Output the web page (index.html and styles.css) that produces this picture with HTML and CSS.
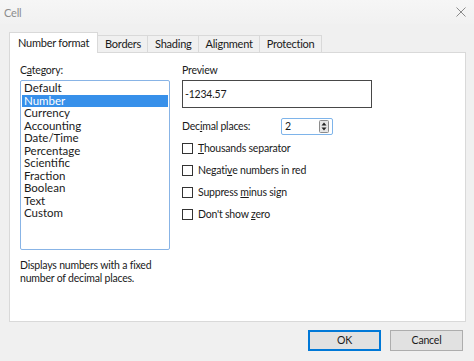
FILE: index.html
```html
<!DOCTYPE html>
<html>
<head>
<meta charset="utf-8">
<link rel="stylesheet" href="styles.css">
</head>
<body>
<div class="window">
  <div class="titlebar">
    <span class="title">Cell</span>
    <svg class="close" width="10" height="10" viewBox="0 0 10 10"><path d="M0.5 0.5 L9.5 9.5 M9.5 0.5 L0.5 9.5" stroke="#8a8a8a" stroke-width="1"/></svg>
  </div>
  <div class="tabs">
    <div class="tab active">Number format</div>
    <div class="tab">Borders</div>
    <div class="tab">Shading</div>
    <div class="tab">Alignment</div>
    <div class="tab">Protection</div>
  </div>
  <div class="panel">
    <div class="col-left">
      <div class="label">C<u>a</u>tegory:</div>
      <div class="listbox">
        <div class="item">Default</div>
        <div class="item selected">Number</div>
        <div class="item">Currency</div>
        <div class="item">Accounting</div>
        <div class="item">Date/Time</div>
        <div class="item">Percentage</div>
        <div class="item">Scientific</div>
        <div class="item">Fraction</div>
        <div class="item">Boolean</div>
        <div class="item">Text</div>
        <div class="item">Custom</div>
      </div>
      <div class="desc">Displays numbers with a fixed<br>number of decimal places.</div>
    </div>
    <div class="col-right">
      <div class="label">Preview</div>
      <div class="preview">-1234.57</div>
      <div class="decimal-row">
        <span class="dlabel">Dec<u>i</u>mal places:</span>
        <div class="spin">
          <span>2</span>
          <svg class="spinbtn" width="10" height="13" viewBox="0 0 10 13">
            <rect x="0.5" y="0.5" width="9" height="12" rx="1" fill="#e6e6e6" stroke="#8c8c8c"/>
            <path d="M5 2.5 L7.5 5.5 L2.5 5.5 Z" fill="#222"/>
            <path d="M5 10.5 L7.5 7.5 L2.5 7.5 Z" fill="#222"/>
          </svg>
        </div>
      </div>
      <div class="checks">
        <div class="check"><span class="box"></span><span><u>T</u>housands separator</span></div>
        <div class="check"><span class="box"></span><span>Negati<u>v</u>e numbers in red</span></div>
        <div class="check"><span class="box"></span><span>Suppress <u>m</u>inus sign</span></div>
        <div class="check"><span class="box"></span><span>Don't show <u>z</u>ero</span></div>
      </div>
    </div>
  </div>
  <div class="buttons">
    <div class="btn default">OK</div>
    <div class="btn">Cancel</div>
  </div>
</div>
</body>
</html>
```
FILE: styles.css
```css
html, body {
  margin: 0;
  padding: 0;
}
body {
  background: #f0f0f0;
  font-family: Lato, "Noto Sans", sans-serif;
  font-size: 10.5px;
  letter-spacing: -0.2px;
  color: #1a1a1a;
}
.window {
  width: 474px;
  height: 361px;
  background: #f0f0f0;
  display: flex;
  flex-direction: column;
  overflow: hidden;
}
.titlebar {
  height: 24px;
  display: flex;
  align-items: center;
  justify-content: space-between;
  padding: 0 8px 0 4px;
  background: linear-gradient(#f6f6f6, #f1f1f1);
}
.title {
  color: #8c8c8c;
  font-size: 11px;
}
.tabs {
  display: flex;
  align-items: flex-end;
  margin: 8px 0 0 9px;
  height: 20px;
  position: relative;
  z-index: 1;
}
.tab {
  height: 17px;
  line-height: 16px;
  padding: 0 6px 0 7px;
  border: 1px solid #d9d9d9;
  border-bottom: none;
  margin-left: -1px;
  background: #f0f0f0;
  box-sizing: border-box;
  font-size: 11px;
  letter-spacing: -0.25px;
}
.tab.active {
  height: 21px;
  line-height: 20px;
  background: #fff;
  margin-left: 0;
  padding: 0 8px 0 8px;
  margin-bottom: -1px;
}
.panel {
  margin: 0 8px 0 9px;
  height: 270px;
  background: #fff;
  border: 1px solid #d9d9d9;
  box-sizing: border-box;
  display: flex;
  padding: 10px 10px 0 10px;
}
.col-left {
  width: 150px;
  display: flex;
  flex-direction: column;
}
.label {
  height: 15px;
  line-height: 15px;
  margin-bottom: 2px;
}
.listbox {
  height: 170px;
  border: 1px solid #88b4e6;
  border-radius: 2px;
  box-sizing: border-box;
  padding: 1px 1px;
}
.item {
  height: 12.5px;
  line-height: 12.5px;
  padding-left: 2px;
  font-size: 11.5px;
  letter-spacing: 0;
}
.item.selected {
  background: #3790ea;
  color: #fff;
}
.desc {
  margin-top: 9px;
  line-height: 12.5px;
  white-space: nowrap;
}
.col-right {
  margin-left: 12px;
  display: flex;
  flex-direction: column;
}
.preview {
  width: 190px;
  height: 28px;
  box-sizing: border-box;
  border: 1px solid #474747;
  padding-left: 2px;
  line-height: 26px;
}
.decimal-row {
  display: flex;
  align-items: center;
  margin-top: 10px;
  height: 17px;
}
.dlabel {
  width: 99px;
  margin-top: -2px;
}
.spin {
  width: 52px;
  height: 17px;
  box-sizing: border-box;
  border: 1px solid #7eb4ea;
  border-radius: 2px;
  display: flex;
  align-items: center;
  justify-content: space-between;
  padding: 0 3px 0 3px;
  margin-top: -1px;
}
.spinbtn {
  display: block;
}
.checks {
  margin-top: 2px;
}
.check {
  display: flex;
  align-items: center;
  height: 22px;
}
.box {
  width: 11px;
  height: 11px;
  box-sizing: border-box;
  border: 1px solid #333;
  margin-right: 5px;
  background: #fff;
}
.buttons {
  display: flex;
  justify-content: flex-end;
  gap: 9px;
  padding: 8px 11px 0 0;
}
.btn {
  width: 73px;
  height: 21px;
  box-sizing: border-box;
  border: 1px solid #adadad;
  background: #e1e1e1;
  text-align: center;
  line-height: 19px;
}
.btn.default {
  border: 1px solid #0078d7;
  box-shadow: inset 0 0 0 1px #0078d7;
}
```
